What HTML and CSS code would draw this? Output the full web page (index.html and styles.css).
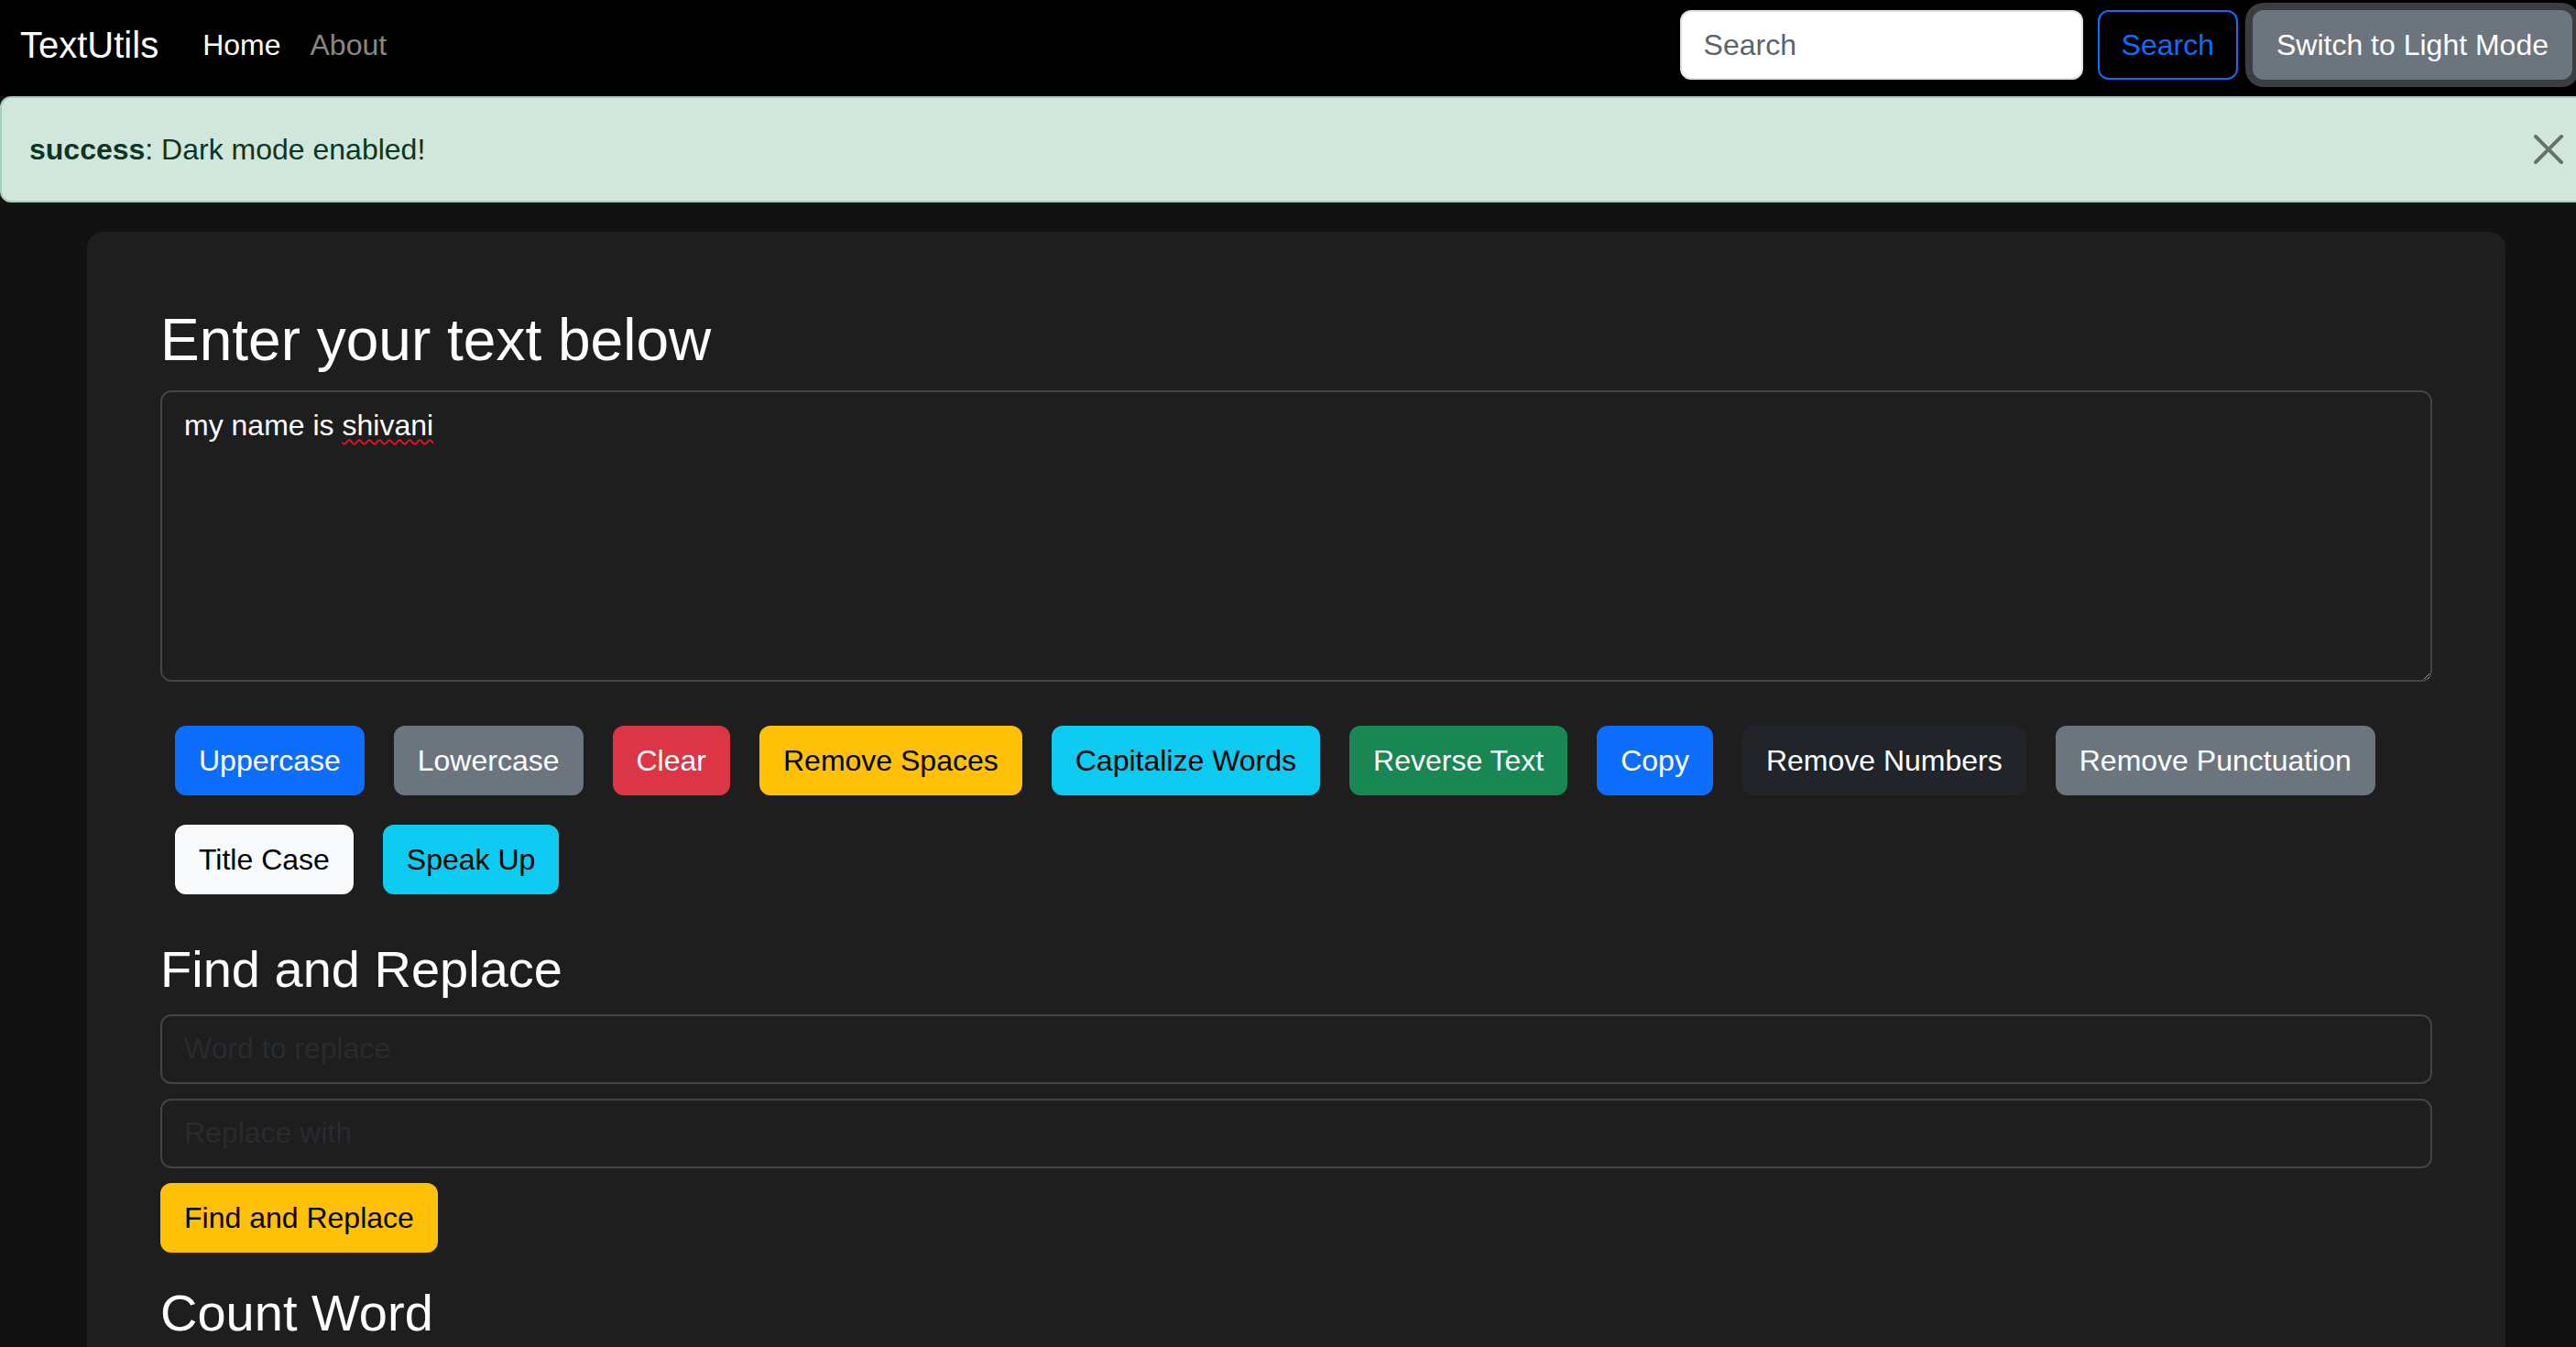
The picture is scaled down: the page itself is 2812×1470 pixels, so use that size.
FILE: index.html
```html
<!DOCTYPE html>
<html lang="en">
<head>
<meta charset="utf-8">
<title>TextUtils</title>
<link rel="stylesheet" href="styles.css">
</head>
<body>
<div class="page">
  <nav class="navbar">
    <a class="brand" href="#">TextUtils</a>
    <ul class="nav-links">
      <li><a class="nav-link active" href="#">Home</a></li>
      <li><a class="nav-link" href="#">About</a></li>
    </ul>
    <div class="nav-right">
      <form class="search-form" role="search">
        <input class="search-input" type="search" placeholder="Search" aria-label="Search">
        <button class="btn btn-outline-primary" type="button">Search</button>
      </form>
      <button class="btn btn-secondary btn-focused" type="button">Switch to Light Mode</button>
    </div>
  </nav>

  <div class="alert" role="alert">
    <div class="alert-text"><strong>success</strong>: Dark mode enabled!</div>
    <button class="btn-close" type="button" aria-label="Close">
      <svg viewBox="0 0 16 16" width="32" height="32" aria-hidden="true"><path d="M.293.293a1 1 0 0 1 1.414 0L8 6.586 14.293.293a1 1 0 1 1 1.414 1.414L9.414 8l6.293 6.293a1 1 0 0 1-1.414 1.414L8 9.414l-6.293 6.293a1 1 0 0 1-1.414-1.414L6.586 8 .293 1.707a1 1 0 0 1 0-1.414z" fill="#000"/></svg>
    </button>
  </div>

  <main class="card">
    <h2 class="title">Enter your text below</h2>
    <div class="textbox" role="textbox" aria-multiline="true">my name is <span class="misspelled">shivani</span></div>

    <div class="btn-row">
      <button class="btn btn-primary" type="button">Uppercase</button>
      <button class="btn btn-secondary" type="button">Lowercase</button>
      <button class="btn btn-danger" type="button">Clear</button>
      <button class="btn btn-warning" type="button">Remove Spaces</button>
      <button class="btn btn-info" type="button">Capitalize Words</button>
      <button class="btn btn-success" type="button">Reverse Text</button>
      <button class="btn btn-primary" type="button">Copy</button>
      <button class="btn btn-dark" type="button">Remove Numbers</button>
      <button class="btn btn-secondary" type="button">Remove Punctuation</button>
      <button class="btn btn-light" type="button">Title Case</button>
      <button class="btn btn-info" type="button">Speak Up</button>
    </div>

    <section class="section">
      <h3 class="section-title">Find and Replace</h3>
      <input class="field" type="text" placeholder="Word to replace">
      <input class="field" type="text" placeholder="Replace with">
      <button class="btn btn-warning" type="button">Find and Replace</button>
    </section>

    <section class="section">
      <h3 class="section-title">Count Word</h3>
    </section>
  </main>
</div>
</body>
</html>
```

FILE: styles.css
```css
* {
  box-sizing: border-box;
}

html,
body {
  margin: 0;
  padding: 0;
  background: #121212;
  overflow: hidden;
}

body {
  font-family: "Liberation Sans", Arial, sans-serif;
  font-size: 32px;
  line-height: 1.5;
  color: #fff;
}

.page {
  width: 2830px;
}

/* ---------- navbar ---------- */
.navbar {
  display: flex;
  align-items: center;
  height: 105px;
  padding: 9px 22px 16px 22px;
  background: #000;
}

.brand {
  font-size: 40px;
  line-height: 60px;
  padding: 10px 0;
  margin-right: 32px;
  color: #fff;
  text-decoration: none;
}

.nav-links {
  display: flex;
  list-style: none;
  margin: 0;
  padding: 0;
}

.nav-link {
  display: block;
  padding: 16px;
  line-height: 48px;
  color: rgba(255, 255, 255, 0.55);
  text-decoration: none;
}

.nav-link.active {
  color: #fff;
}

.nav-right {
  margin-left: auto;
  display: flex;
  align-items: center;
  gap: 16px;
}

.search-form {
  display: flex;
  gap: 16px;
  margin: 0;
}

.search-input {
  width: 440px;
  height: 76px;
  padding: 12px 24px;
  font: inherit;
  color: #212529;
  background: #fff;
  border: 2px solid #dee2e6;
  border-radius: 12px;
  outline: none;
}

.search-input::placeholder {
  color: #5c636a;
}

/* ---------- buttons ---------- */
.btn {
  font-family: inherit;
  font-size: 32px;
  line-height: 48px;
  padding: 12px 24px;
  border: 2px solid transparent;
  border-radius: 12px;
  color: #fff;
  background: transparent;
  cursor: pointer;
  white-space: nowrap;
}

.btn-primary { background: #0d6efd; border-color: #0d6efd; color: #fff; }
.btn-secondary { background: #6c757d; border-color: #6c757d; color: #fff; }
.btn-danger { background: #dc3545; border-color: #dc3545; color: #fff; }
.btn-warning { background: #ffc107; border-color: #ffc107; color: #000; }
.btn-info { background: #0dcaf0; border-color: #0dcaf0; color: #000; }
.btn-success { background: #198754; border-color: #198754; color: #fff; }
.btn-dark { background: #212529; border-color: #212529; color: #fff; }
.btn-light { background: #f8f9fa; border-color: #f8f9fa; color: #000; }

.btn-outline-primary {
  background: transparent;
  border-color: #0d6efd;
  color: #0d6efd;
}

.btn-focused {
  box-shadow: 0 0 0 8px #3a3d41;
}

/* ---------- alert ---------- */
.alert {
  display: flex;
  align-items: center;
  justify-content: space-between;
  padding: 32px 30px;
  margin-bottom: 32px;
  background: #d1e7dd;
  border: 2px solid #a3cfbb;
  border-radius: 12px;
  color: #0a3622;
}

.alert-text {
  line-height: 48px;
}

.alert-text strong {
  font-weight: 700;
}

.btn-close {
  display: flex;
  width: 32px;
  height: 32px;
  padding: 0;
  border: 0;
  background: none;
  opacity: 0.5;
  cursor: pointer;
}

/* ---------- card ---------- */
.card {
  display: block;
  width: 2640px;
  min-height: 1400px;
  margin: 0 auto;
  padding: 80px;
  background: #1e1e1e;
  border-radius: 18px;
}

.title {
  font-size: 64px;
  line-height: 1.2;
  font-weight: 400;
  margin: 0 0 16px;
}

.textbox {
  height: 318px;
  padding: 12px 24px;
  margin-bottom: 32px;
  border: 2px solid #444;
  border-radius: 12px;
  background: #1e1e1e;
  color: #fff;
  line-height: 48px;
  resize: vertical;
  overflow: auto;
  color-scheme: dark;
}

.misspelled {
  text-decoration: underline wavy #e81123;
  text-decoration-thickness: 2px;
  text-underline-offset: 4px;
  text-decoration-skip-ink: none;
}

.btn-row {
  display: flex;
  flex-wrap: wrap;
}

.btn-row .btn {
  margin: 16px;
}

.section-title {
  font-size: 56px;
  line-height: 1.2;
  font-weight: 400;
  margin: 32px 0 16px;
}

.field {
  display: block;
  width: 100%;
  height: 76px;
  padding: 12px 24px;
  margin-bottom: 16px;
  font: inherit;
  color: #fff;
  background: #1e1e1e;
  border: 2px solid #444;
  border-radius: 12px;
  outline: none;
}

.field::placeholder {
  color: #282b2f;
}
```
